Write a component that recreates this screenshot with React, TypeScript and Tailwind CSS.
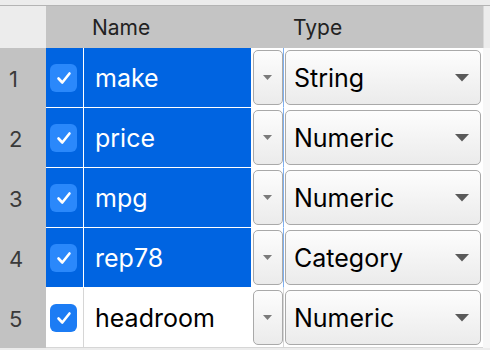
import { Fragment } from 'react';

type Row = { n: number; name: string; type: string; selected: boolean };

const rows: Row[] = [
  { n: 1, name: 'make', type: 'String', selected: true },
  { n: 2, name: 'price', type: 'Numeric', selected: true },
  { n: 3, name: 'mpg', type: 'Numeric', selected: true },
  { n: 4, name: 'rep78', type: 'Category', selected: true },
  { n: 5, name: 'headroom', type: 'Numeric', selected: false },
];

function Caret({ big }: { big?: boolean }) {
  return big ? (
    <svg width="14" height="8" viewBox="0 0 14 8">
      <path d="M0 0 L14 0 L7 7.5 Z" fill="#5a5a5a" />
    </svg>
  ) : (
    <svg width="9" height="5" viewBox="0 0 9 5">
      <path d="M0 0 L9 0 L4.5 5 Z" fill="#7a7a7a" />
    </svg>
  );
}

function Check({ selected }: { selected: boolean }) {
  return (
    <div
      className={`flex h-[28px] w-[27px] items-center justify-center rounded-[6px] ${
        selected ? 'bg-[#2a88fb]' : 'bg-[#1c7cf4]'
      }`}
    >
      <svg width="16" height="14" viewBox="0 0 16 14">
        <path
          d="M2.5 7.5 L6.3 11.5 L13.5 2.5"
          fill="none"
          stroke="white"
          strokeWidth="2.6"
          strokeLinecap="round"
          strokeLinejoin="round"
        />
      </svg>
    </div>
  );
}

function DataRow({ row }: { row: Row }) {
  const sel = row.selected;
  const line = sel ? 'border-white' : 'border-[#d6d6d6]';
  return (
    <div className="flex h-[60px]">
      <div className="flex w-[46px] items-center bg-[#c2c2c2] pl-[9px] pt-[2px] text-[22px] text-[#3a3a3a]">
        {row.n}
      </div>
      <div className={`flex w-[37px] items-center border-b pl-[4px] pt-[1px] ${line} ${sel ? 'bg-[#0064e1]' : 'bg-white'}`}>
        <Check selected={sel} />
      </div>
      <div
        className={`flex w-[168px] items-center border-b border-l pl-[11px] pt-[3px] text-[25px] ${line} ${
          sel ? 'bg-[#0064e1] text-white' : 'bg-white text-black'
        }`}
      >
        {row.name}
      </div>
      <div className={`flex w-[32px] items-center justify-center border-b bg-white py-[2px] pl-[1px] ${line}`}>
        <div className="flex h-full w-[30px] items-center justify-center rounded-[5px] border border-[#a9a9a9] bg-gradient-to-b from-[#fdfdfd] to-[#ebebeb]">
          <Caret />
        </div>
      </div>
      <div className={`flex w-[200px] items-center border-b border-l bg-white py-[2px] pl-[1px] pr-[2px] ${sel ? 'border-l-[#7fb0f0] border-b-white' : 'border-[#d6d6d6]'}`}>
        <div className="flex h-full w-full items-center justify-between rounded-[5px] border border-[#a9a9a9] bg-gradient-to-b from-[#fdfdfd] to-[#ebebeb] pl-[8px] pr-[11px] text-[25px] text-black">
          <span className="pt-[3px]">{row.type}</span>
          <Caret big />
        </div>
      </div>
      <div className="w-[7px] bg-[#f7f7f7]" />
    </div>
  );
}

export default function App() {
  return (
    <div
      className="flex h-[350px] w-[490px] flex-col overflow-hidden bg-[#ececec]"
      style={{ fontFamily: 'Inter, "Liberation Sans", sans-serif' }}
    >
      <div className="h-[6px] shrink-0 border-b border-[#b4b4b4] bg-[#ececec]" />
      <div className="flex h-[42px] shrink-0">
        <div className="w-[46px] bg-[#ececec]" />
        <div className="flex w-[437px] items-center bg-[#c4c4c4] pt-[2px] text-[21px] text-[#222]">
          <span className="ml-[46px] w-[201px]">Name</span>
          <span>Type</span>
        </div>
        <div className="w-[7px] border-l border-[#d8d8d8] bg-[#ececec]" />
      </div>
      {rows.map((r) => (
        <Fragment key={r.n}>
          <DataRow row={r} />
        </Fragment>
      ))}
    </div>
  );
}
